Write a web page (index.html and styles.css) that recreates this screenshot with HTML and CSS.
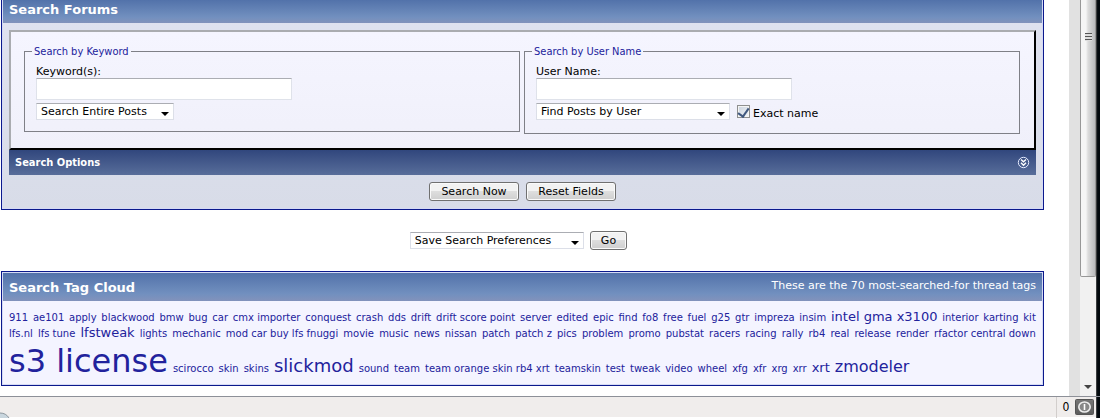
FILE: index.html
```html
<!DOCTYPE html>
<html lang="en">
<head>
<meta charset="utf-8">
<title>Search Forums</title>
<link rel="stylesheet" href="styles.css">
</head>
<body>
<div class="viewport">
  <main class="page">
    <form class="panel search-panel">
      <h1 class="panel-title">Search Forums</h1>
      <div class="panel-body">
        <div class="criteria">
          <fieldset class="group">
            <legend>Search by Keyword</legend>
            <label class="caption" for="keywords">Keyword(s):</label>
            <input class="textbox" type="text" id="keywords">
            <div class="controls">
              <span class="dropdown scope"><select aria-label="Search scope"><option>Search Entire Posts</option><option>Search Titles Only</option></select></span>
            </div>
          </fieldset>
          <fieldset class="group">
            <legend>Search by User Name</legend>
            <label class="caption" for="username">User Name:</label>
            <input class="textbox" type="text" id="username">
            <div class="controls user-controls">
              <span class="dropdown starter"><select aria-label="Post author"><option>Find Posts by User</option><option>Find Threads Started by User</option></select></span>
              <label class="exact"><input class="tick" type="checkbox" checked>Exact name</label>
            </div>
          </fieldset>
        </div>
        <div class="options-bar">
          <span>Search Options</span>
          <button class="expand" type="button" aria-label="Expand search options">
            <svg width="13" height="13" viewBox="0 0 13 13" fill="none" stroke="#fff"><circle cx="6.5" cy="6.5" r="5.2" stroke="#e4eaff"/><path d="M4 3.5l2.5 2.3L9 3.5M4 6.8l2.5 2.4L9 6.8" stroke-width="1.4"/></svg>
          </button>
        </div>
        <div class="actions">
          <button class="button wide" type="button">Search Now</button>
          <button class="button wide" type="reset">Reset Fields</button>
        </div>
      </div>
    </form>

    <form class="preferences">
      <span class="dropdown prefs"><select aria-label="Search preferences"><option>Save Search Preferences</option><option>Clear Search Preferences</option></select></span>
      <button class="button" type="button">Go</button>
    </form>

    <section class="panel cloud-panel">
      <div class="panel-title cloud-title">
        <h2>Search Tag Cloud</h2>
        <span class="note">These are the 70 most-searched-for thread tags</span>
      </div>
      <div class="cloud">
        <div class="tags"><a href="#">911</a><a href="#">ae101</a><a href="#">apply</a><a href="#">blackwood</a><a href="#">bmw</a><a href="#">bug</a><a href="#">car</a><a href="#">cmx importer</a><a href="#">conquest</a><a href="#">crash</a><a href="#">dds</a><a href="#">drift</a><a href="#">drift score point</a><a href="#">server</a><a href="#">edited</a><a href="#">epic</a><a href="#">find</a><a href="#">fo8</a><a href="#">free</a><a href="#">fuel</a><a href="#">g25</a><a href="#">gtr</a><a href="#">impreza</a><a href="#">insim</a><a href="#" class="level-2">intel gma x3100</a><a href="#">interior</a><a href="#">karting</a><a href="#">kit</a></div>
        <div class="tags"><a href="#">lfs.nl</a><a href="#">lfs tune</a><a href="#" class="level-2">lfstweak</a><a href="#">lights</a><a href="#">mechanic</a><a href="#">mod car buy lfs fnuggi</a><a href="#">movie</a><a href="#">music</a><a href="#">news</a><a href="#">nissan</a><a href="#">patch</a><a href="#">patch z</a><a href="#">pics</a><a href="#">problem</a><a href="#">promo</a><a href="#">pubstat</a><a href="#">racers</a><a href="#">racing</a><a href="#">rally</a><a href="#">rb4</a><a href="#">real</a><a href="#">release</a><a href="#">render</a><a href="#">rfactor central down</a></div>
        <div class="tags last"><a href="#" class="level-5">s3 license</a><a href="#">scirocco</a><a href="#">skin</a><a href="#">skins</a><a href="#" class="level-4">slickmod</a><a href="#">sound</a><a href="#">team</a><a href="#">team orange skin rb4 xrt</a><a href="#">teamskin</a><a href="#">test</a><a href="#">tweak</a><a href="#">video</a><a href="#">wheel</a><a href="#">xfg</a><a href="#">xfr</a><a href="#">xrg</a><a href="#">xrr</a><a href="#" class="level-2">xrt</a><a href="#" class="level-3">zmodeler</a></div>
      </div>
    </section>
  </main>
  <div class="gutter"></div>
  <div class="scrollbar">
    <div class="thumb"><span class="grip"></span></div>
    <svg class="down" width="8" height="5" viewBox="0 0 8 5"><path d="M0 0h8L4 4z" fill="#444"/></svg>
  </div>
  <div class="frame"></div>
</div>
<footer class="statusbar">
  <svg class="throbber" width="10" height="6" viewBox="0 0 10 6"><path d="M0 1Q6 1 9 6H0z" fill="#c9d6de"/><path d="M0 1Q6 1 9 6" fill="none" stroke="#8d979e"/></svg>
  <div class="counter">0</div>
  <svg class="badge" width="19" height="16" viewBox="0 0 19 16"><defs><linearGradient id="metal" x2="0" y2="1"><stop stop-color="#777"/><stop offset="1" stop-color="#5b5b5b"/></linearGradient></defs><rect x=".5" y=".5" width="18" height="15" rx="1" fill="url(#metal)" stroke="#555"/><ellipse cx="9.5" cy="8" rx="5.7" ry="5" fill="#888" stroke="#eee" stroke-width="1.6"/><path d="M9.5 5v6" stroke="#fff" stroke-width="1.6"/></svg>
  <div class="frame"></div>
</footer>
</body>
</html>
```
FILE: styles.css
```css
* { box-sizing: border-box; }

body {
  margin: 0;
  min-height: 100vh;
  display: flex;
  flex-direction: column;
  background: #fff;
  color: #000;
  font: 11px/13px "DejaVu Sans", Verdana, sans-serif;
}

button, input, select { font: inherit; color: inherit; margin: 0; }

.viewport { flex: 1; display: flex; }
.page { flex: 1; min-width: 0; padding: 0 25px 10px 1px; }

/* Panels */
.panel {
  border: 1px solid #0b198c;
  background: #dfe1ef;
  box-shadow: inset 0 0 0 1px #d5daf5;
}
.search-panel { border-top: 0; background: linear-gradient(#e0e2f0, #d8dce8); }
.panel-title {
  margin: 0 1px;
  padding: 0 6px;
  color: #fff;
  font-size: 13px;
  font-weight: bold;
  line-height: 18px;
  background: linear-gradient(#5272aa, #7290bf 75%, #8292bb);
}
.search-panel .panel-title { padding-top: 1px; padding-bottom: 4px; }
.panel-body { padding: 7px 7px 8px; }

.criteria {
  display: flex;
  align-items: flex-start;
  gap: 4px;
  padding: 13px 14px 14px 13px;
  border: 2px solid;
  border-color: #aaacb0 #000 #000 #aaacb0;
  background: linear-gradient(#f5f5ff, #f0f0fa);
}
.group {
  flex: 1;
  min-width: 0;
  margin: 0;
  padding: 7px 11px 11px;
  border: 1px solid #7f8087;
}
legend {
  margin-left: -4px;
  padding: 0 2px;
  color: #22229c;
  font-family: "DejaVu Sans Condensed", "DejaVu Sans", Tahoma, sans-serif;
}
.caption { display: block; }
.textbox {
  display: block;
  width: 256px;
  max-width: 100%;
  height: 22px;
  padding: 2px 4px;
  border: 1px solid #dfe2ea;
  border-top-color: #abadb3;
  background: #fff;
}
.controls { display: flex; align-items: center; margin-top: 3px; }
.user-controls { height: 21px; margin-top: 1px; gap: 7px; }

.dropdown { position: relative; display: inline-block; }
.dropdown::after {
  content: "";
  position: absolute;
  right: 5px;
  top: 9px;
  border: 4px solid transparent;
  border-top-color: #000;
  border-bottom: 0;
  pointer-events: none;
}
select {
  appearance: none;
  display: block;
  width: 100%;
  height: 17px;
  padding: 0 16px 0 4px;
  border: 1px solid #dcdfe8;
  border-top-color: #abadb3;
  border-radius: 0;
  background: #fff;
}
.scope { width: 138px; }
.starter { width: 194px; }
.prefs { width: 174px; }

.exact {
  display: flex;
  align-items: flex-start;
  gap: 3px;
  padding-top: 4px;
  line-height: 17px;
}
.tick {
  appearance: none;
  width: 13px;
  height: 13px;
  border: 1px solid #8e8f8f;
  background: linear-gradient(135deg, #c9d2de, #f4f6f9);
  box-shadow: inset 0 0 0 1px #f4f4f4;
  display: flex;
  justify-content: center;
}
.tick:checked::after {
  content: "";
  width: 5px;
  height: 9px;
  border: solid #40587f;
  border-width: 0 2px 2px 0;
  transform: rotate(35deg);
}

.options-bar {
  display: flex;
  align-items: center;
  justify-content: space-between;
  height: 25px;
  padding: 0 6px;
  color: #fff;
  background: linear-gradient(#31477d, #586d9a);
  font-family: "DejaVu Sans Condensed", "DejaVu Sans", Tahoma, sans-serif;
  font-weight: bold;
}
.expand { display: flex; padding: 0; border: 0; background: none; }

.actions { display: flex; justify-content: center; gap: 7px; padding-top: 7px; }
.button {
  height: 19px;
  padding: 0 10px;
  border: 1px solid #707070;
  border-radius: 3px;
  background: linear-gradient(#f2f2f2 50%, #dedede 50%, #cfcfcf);
  box-shadow: inset 0 0 0 1px #fafafa;
}
.wide { width: 90px; padding: 0; }

.preferences {
  display: flex;
  justify-content: center;
  align-items: center;
  gap: 6px;
  padding: 21px 8px 21px 0;
}

/* Tag cloud */
.cloud-panel { background: #f4f4ff; padding-top: 1px; }
.cloud-title {
  display: flex;
  justify-content: space-between;
  align-items: flex-start;
  padding: 6px 6px 4px;
}
.cloud-title h2 { margin: 0; font: inherit; }
.note { font-size: 11px; font-weight: normal; line-height: 14px; }
.cloud { padding: 9px 7px 5px; }
.tags {
  display: flex;
  align-items: baseline;
  justify-content: space-between;
  font-size: 10px;
  line-height: 16px;
  white-space: nowrap;
}
.tags.last { justify-content: flex-start; gap: 5px; }
.tags a { color: #22229c; text-decoration: none; }
.tags .level-2 { font-size: 13px; line-height: 14px; }
.tags .level-3 { font-size: 16px; }
.tags .level-4 { font-size: 18px; }
.tags .level-5 { font-size: 32px; line-height: 38px; }

/* Browser chrome */
.gutter { width: 11px; background: #e1e1e1; }
.scrollbar {
  display: flex;
  flex-direction: column;
  justify-content: space-between;
  align-items: center;
  width: 16px;
  padding-bottom: 6px;
  background: #f1f1f1;
}
.thumb {
  width: 100%;
  height: 277px;
  padding: 33px 0 0 4px;
  border: 1px solid #979797;
  border-top: 0;
  border-radius: 0 0 2px 2px;
  background: linear-gradient(90deg, #f5f5f5 35%, #dcdcdc 50%, #b9babd);
}
.grip {
  display: block;
  width: 7px;
  height: 8px;
  background: repeating-linear-gradient(#555 0 1px, #ddd 1px 3px);
}
.frame { width: 4px; background: linear-gradient(90deg, #555, #02080d 40%); }
.statusbar {
  display: flex;
  align-items: stretch;
  height: 22px;
  border-top: 1px solid #8d9098;
  background: linear-gradient(#f0edec 20px, #fff 20px);
}
.throbber { align-self: flex-end; margin-right: auto; }
.counter {
  width: 19px;
  border-left: 1px solid #d2cecc;
  font: 12px/20px "DejaVu Sans Condensed", "DejaVu Sans", sans-serif;
  text-align: center;
}
.badge { margin: 2px 2px 0 0; }
```
